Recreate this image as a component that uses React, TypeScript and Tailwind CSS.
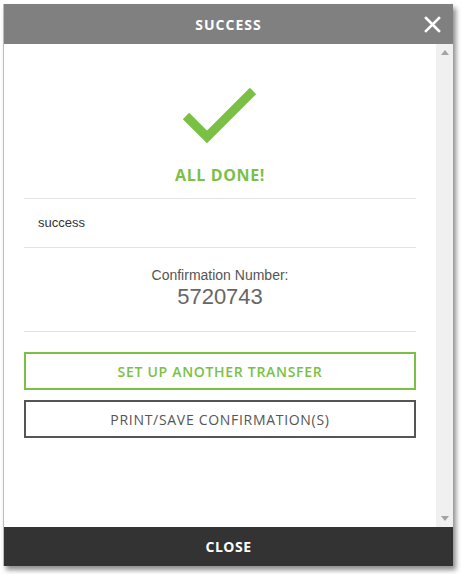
import React from 'react'

const sans = 'font-["Open_Sans",sans-serif]'
const arial = 'font-["Liberation_Sans",Arial,sans-serif]'

function Divider() {
    return <div className="h-px bg-[#e3e3e3]" />
}

export default function App() {
    return (
        <div className="min-h-[574px] w-[461px] bg-white pl-[3px] pt-[4px]">
            <div className="flex h-[562px] w-[450px] flex-col border-l border-[#bdbdbd] shadow-[3px_4px_5px_rgba(0,0,0,0.45)]">
                {/* header */}
                <div className="relative flex h-[40px] shrink-0 items-center justify-center bg-[#808080]">
                    <span className={`${sans} text-[14px] font-bold tracking-[1px] text-white`}>SUCCESS</span>
                    <button className="absolute right-[12px] top-[11px] flex h-[18px] w-[18px] items-center justify-center">
                        <svg width="17" height="17" viewBox="0 0 17 17" fill="none">
                            <path d="M2 2L15 15M15 2L2 15" stroke="white" strokeWidth="2.6" strokeLinecap="square" />
                        </svg>
                    </button>
                </div>

                {/* body */}
                <div className="flex min-h-0 flex-1">
                    <div className="flex-1 bg-white px-[20px]">
                        <div className="flex justify-center pt-[40px]">
                            <svg width="82" height="62" viewBox="0 0 82 62" fill="none">
                                <path d="M7 32L28 53L74 7" stroke="#7ac143" strokeWidth="9" strokeLinejoin="miter" />
                            </svg>
                        </div>
                        <div className={`${sans} mt-[19px] text-center text-[16px] font-bold leading-[20px] tracking-[0.6px] text-[#7ac143]`}>
                            ALL DONE!
                        </div>
                        <div className="mt-[13px]">
                            <Divider />
                        </div>
                        <div className={`${arial} flex h-[48px] items-center px-[14px] text-[13px] text-[#333]`}>
                            success
                        </div>
                        <Divider />
                        <div className={`${arial} pt-[18px] pb-[21px] text-center`}>
                            <div className="text-[14px] leading-[18px] text-[#555]">Confirmation Number:</div>
                            <div className="text-[22px] leading-[26px] text-[#666]">5720743</div>
                        </div>
                        <Divider />
                        <div className="mt-[20px] flex flex-col gap-[10px]">
                            <button className={`${sans} h-[38px] w-full border-2 border-[#7ac143] text-[14px] font-semibold tracking-[0.7px] text-[#7ac143]`}>
                                SET UP ANOTHER TRANSFER
                            </button>
                            <button className={`${sans} h-[38px] w-full border-2 border-[#555] text-[14px] font-medium tracking-[0.7px] text-[#555]`}>
                                PRINT/SAVE CONFIRMATION(S)
                            </button>
                        </div>
                    </div>
                    {/* scrollbar */}
                    <div className="flex w-[17px] shrink-0 flex-col items-center justify-between bg-[#f0f0f0] py-[6px]">
                        <svg width="8" height="5" viewBox="0 0 8 5">
                            <path d="M0 5L4 0L8 5Z" fill="#a3a3a3" />
                        </svg>
                        <svg width="8" height="5" viewBox="0 0 8 5">
                            <path d="M0 0L8 0L4 5Z" fill="#a3a3a3" />
                        </svg>
                    </div>
                </div>

                {/* footer */}
                <div className="flex h-[39px] shrink-0 items-center justify-center bg-[#333333]">
                    <span className={`${sans} text-[14px] font-bold tracking-[0.5px] text-white`}>CLOSE</span>
                </div>
            </div>
        </div>
    )
}
